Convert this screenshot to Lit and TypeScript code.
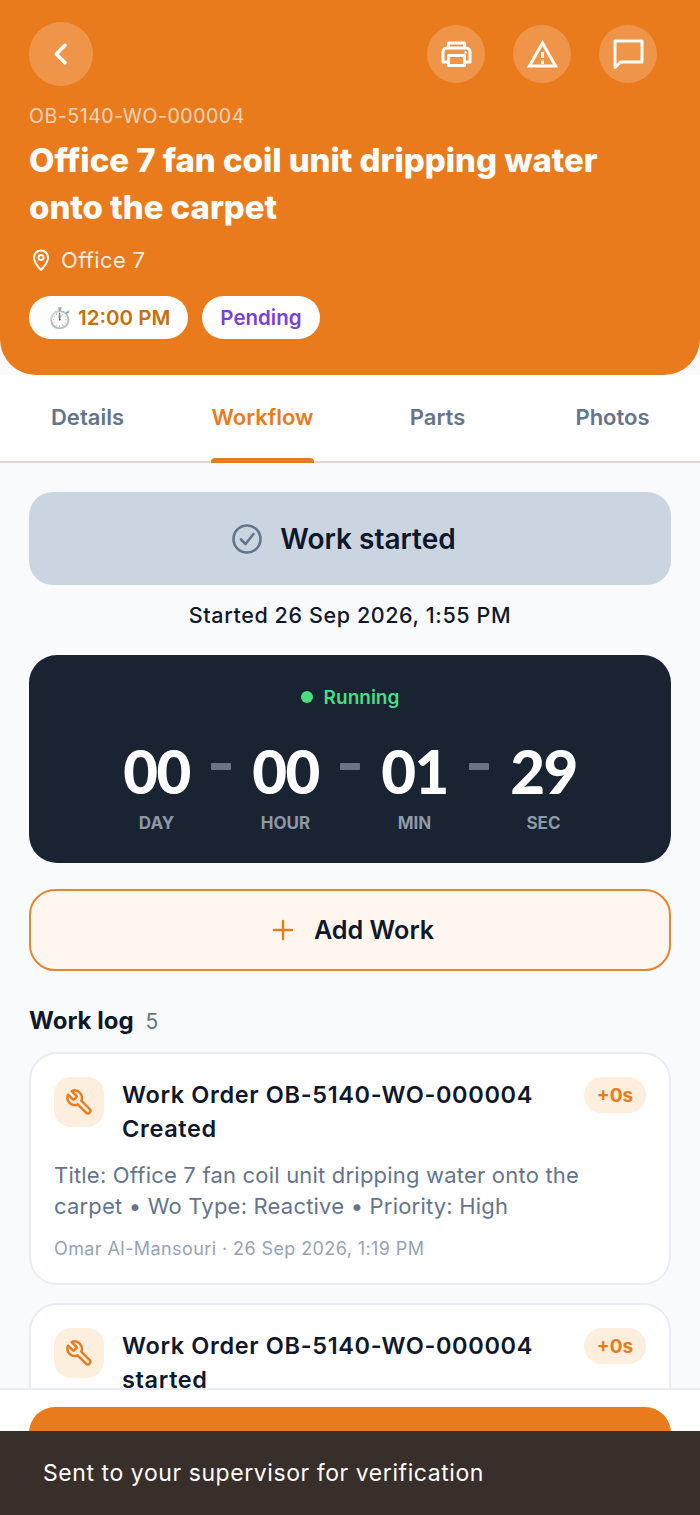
import { LitElement, html, css } from 'lit';
import { customElement } from 'lit/decorators.js';

const wrench = html`<svg viewBox="0 0 24 24" width="29" height="29" fill="none" stroke="currentColor" stroke-width="2" stroke-linecap="round" stroke-linejoin="round"><path d="M14.7 6.3a1 1 0 0 0 0 1.4l1.6 1.6a1 1 0 0 0 1.4 0l3.77-3.77a6 6 0 0 1-7.94 7.94l-6.91 6.91a2.12 2.12 0 0 1-3-3l6.91-6.91a6 6 0 0 1 7.94-7.94l-3.76 3.76z" transform="matrix(-1 0 0 1 24 0)"/></svg>`;

// second entry runs under the footer, only its title is visible
const logs = [
  {
    title: 'Work Order OB-5140-WO-000004 Created',
    desc: 'Title: Office 7 fan coil unit dripping water onto the carpet • Wo Type: Reactive • Priority: High',
    meta: 'Omar Al-Mansouri · 26 Sep 2026, 1:19 PM',
  },
  { title: 'Work Order OB-5140-WO-000004 started', desc: '', meta: '' },
];

const timer = [
  ['00', 'DAY'],
  ['00', 'HOUR'],
  ['01', 'MIN'],
  ['29', 'SEC'],
];

@customElement('app-root')
export class AppRoot extends LitElement {
  static styles = css`
    :host {
      display: flex;
      flex-direction: column;
      position: relative;
      height: 1515px;
      overflow: hidden;
      background: #f8fafc;
      font-family: Inter, 'Liberation Sans', sans-serif;
      color: #0f172a;
    }
    .header {
      flex: none;
      box-sizing: border-box;
      height: 375px;
      background: #ea7b1c;
      border-radius: 0 0 36px 36px;
      padding: 22px 29px 0;
      color: #fff;
    }
    .top {
      display: flex;
      justify-content: space-between;
      align-items: center;
      height: 64px;
      padding-right: 14px;
    }
    .round {
      display: flex;
      align-items: center;
      justify-content: center;
      border-radius: 50%;
      background: rgba(255, 255, 255, 0.2);
    }
    .back {
      width: 64px;
      height: 64px;
    }
    .actions {
      display: flex;
      gap: 28px;
    }
    .actions .round {
      width: 58px;
      height: 58px;
    }
    .code {
      margin-top: 18px;
      font-size: 19.5px;
      line-height: 24px;
      letter-spacing: 0.55px;
      color: rgba(255, 255, 255, 0.7);
    }
    h1 {
      margin: 9px 0 0;
      font-size: 33px;
      line-height: 47px;
      font-weight: 800;
      letter-spacing: -0.05px;
    }
    .place {
      display: flex;
      align-items: center;
      gap: 8px;
      margin-top: 14px;
      height: 30px;
      font-size: 22px;
      letter-spacing: 0.35px;
      color: rgba(255, 255, 255, 0.88);
    }
    .chips {
      display: flex;
      gap: 14px;
      margin-top: 21px;
    }
    .chip {
      display: flex;
      align-items: center;
      gap: 5px;
      height: 43px;
      padding: 0 18px;
      border-radius: 22px;
      background: #fff;
      font-size: 20.5px;
      font-weight: 600;
    }
    .time {
      color: #c2710c;
    }
    .state {
      color: #7c3fd6;
    }
    .tabs {
      flex: none;
      display: grid;
      grid-template-columns: repeat(4, 1fr);
      height: 88px;
      box-sizing: border-box;
      background: #fff;
      border-bottom: 2px solid #e4d6cf;
    }
    .tab {
      display: flex;
      align-items: center;
      justify-content: center;
      position: relative;
      padding-bottom: 2px;
      font-size: 22px;
      font-weight: 600;
      color: #64748b;
    }
    .tab.on {
      color: #ea7b1c;
    }
    .tab.on::after {
      content: '';
      position: absolute;
      left: 36px;
      right: 36px;
      bottom: -2px;
      height: 5px;
      border-radius: 4px 4px 0 0;
      background: #ea7b1c;
    }
    .body {
      flex: 1;
      min-height: 0;
      overflow: hidden;
      padding: 29px 29px 0;
    }
    .started {
      display: flex;
      align-items: center;
      justify-content: center;
      gap: 18px;
      height: 93px;
      padding-right: 12px;
      border-radius: 24px;
      background: #cbd5e1;
      font-size: 28px;
      font-weight: 600;
    }
    .since {
      margin-top: 17px;
      text-align: center;
      font-size: 21.5px;
      line-height: 26px;
      font-weight: 500;
      letter-spacing: 0.6px;
    }
    .clock {
      box-sizing: border-box;
      height: 208px;
      margin-top: 27px;
      padding-top: 30px;
      border-radius: 28px;
      background: #1a2332;
    }
    .running {
      display: flex;
      align-items: center;
      justify-content: center;
      gap: 11px;
      height: 24px;
      font-size: 19px;
      font-weight: 600;
      color: #4ade80;
    }
    .dot {
      width: 12px;
      height: 12px;
      border-radius: 50%;
      background: #4ade80;
    }
    .digits {
      display: flex;
      justify-content: center;
      margin-top: 31px;
    }
    .unit {
      width: 100px;
      text-align: center;
    }
    .num {
      font-family: Lato, Inter, sans-serif;
      font-size: 60px;
      line-height: 62px;
      font-weight: 900;
      letter-spacing: -1.5px;
      color: #fff;
    }
    .lab {
      margin-top: 11px;
      font-size: 17px;
      line-height: 20px;
      font-weight: 700;
      color: #8f98a6;
    }
    .sep {
      width: 20px;
      height: 7px;
      margin: 23px 4.5px 0;
      border-radius: 1px;
      background: #6b7482;
    }
    .add {
      display: flex;
      align-items: center;
      justify-content: center;
      gap: 20px;
      box-sizing: border-box;
      height: 82px;
      margin-top: 26px;
      padding-left: 6px;
      border: 2px solid #e5862f;
      border-radius: 26px;
      background: #fff7ef;
      font-size: 25.2px;
      font-weight: 600;
    }
    .log-head {
      display: flex;
      align-items: baseline;
      gap: 12px;
      margin: 35px 0 15px;
      line-height: 30px;
      font-size: 24px;
      font-weight: 700;
    }
    .log-head span {
      font-size: 21px;
      font-weight: 400;
      color: #64748b;
    }
    .card {
      box-sizing: border-box;
      min-height: 233px;
      margin-bottom: 18px;
      padding: 23px 23px 20px;
      border: 2px solid #e8edf3;
      border-radius: 28px;
      background: #fff;
    }
    .row {
      display: flex;
      align-items: flex-start;
      gap: 18px;
    }
    .icon {
      flex: none;
      display: flex;
      align-items: center;
      justify-content: center;
      width: 50px;
      height: 50px;
      border-radius: 17px;
      background: #fdeedd;
      color: #ea7b1c;
    }
    .name {
      flex: 1;
      margin-top: 1px;
      font-size: 23.5px;
      line-height: 34px;
      font-weight: 600;
      letter-spacing: 0.64px;
    }
    .badge {
      flex: none;
      display: flex;
      align-items: center;
      justify-content: center;
      width: 62px;
      height: 36px;
      border-radius: 18px;
      background: #fdeedd;
      color: #ea7b1c;
      font-size: 19px;
      font-weight: 700;
    }
    .desc {
      margin-top: 14px;
      font-size: 22px;
      line-height: 31px;
      letter-spacing: 0.2px;
      color: #64748b;
    }
    .meta {
      margin-top: 16px;
      font-size: 18px;
      line-height: 22px;
      letter-spacing: 0.41px;
      color: #94a3b8;
    }
    .footer {
      flex: none;
      box-sizing: border-box;
      height: 127px;
      padding: 17px 29px 0;
      background: #fff;
      border-top: 2px solid #e8edf3;
    }
    .cta {
      height: 90px;
      border-radius: 26px;
      background: #ea7b1c;
    }
    .toast {
      position: absolute;
      left: 0;
      right: 0;
      bottom: 0;
      display: flex;
      align-items: center;
      box-sizing: border-box;
      height: 84px;
      padding-left: 43px;
      background: #382e2a;
      color: #fff;
      font-size: 23px;
      letter-spacing: 0.57px;
    }
  `;

  render() {
    return html`
      <div class="header">
        <div class="top">
          <div class="round back">
            <svg viewBox="0 0 24 24" width="32" height="32" fill="none" stroke="#fff" stroke-width="2.7" stroke-linecap="round" stroke-linejoin="round"><path d="M15 5.500 8.500 12l6.500 6.500"/></svg>
          </div>
          <div class="actions">
            <div class="round">
              <svg viewBox="0 0 35 35" width="35" height="35" fill="none" stroke="#fff" stroke-width="3" stroke-linejoin="round"><path d="M9.500 11V6h16v5"/><path d="M9 25H4v-10a4 4 0 0 1 4-4h19a4 4 0 0 1 4 4v10h-5"/><path d="M9.500 18.500h16v10h-16z"/><circle cx="26.500" cy="15.500" r="1.300" fill="#fff" stroke="none"/></svg>
            </div>
            <div class="round">
              <svg viewBox="0 0 35 35" width="35" height="35" fill="none" stroke="#fff" stroke-width="3"><path d="M17.500 6 4.500 29h26z"/><path d="M17.500 15v6M17.500 23.500v3.500"/></svg>
            </div>
            <div class="round">
              <svg viewBox="0 0 35 35" width="35" height="35" fill="none" stroke="#fff" stroke-width="3" stroke-linejoin="round"><path d="M4 4h27v21H9.500L4 30.500z"/></svg>
            </div>
          </div>
        </div>
        <div class="code">OB-5140-WO-000004</div>
        <h1>Office 7 fan coil unit dripping water<br />onto the carpet</h1>
        <div class="place">
          <svg viewBox="0 0 24 24" width="24" height="24" fill="none" stroke="#fff" stroke-width="2" stroke-linejoin="round"><path d="M12 22s7-7.200 7-12.500a7 7 0 0 0-14 0C5 14.800 12 22 12 22z"/><circle cx="12" cy="9.500" r="2.500"/></svg>
          Office 7
        </div>
        <div class="chips">
          <div class="chip time"><span>⏱️</span>12:00 PM</div>
          <div class="chip state">Pending</div>
        </div>
      </div>
      <div class="tabs">
        <div class="tab">Details</div>
        <div class="tab on">Workflow</div>
        <div class="tab">Parts</div>
        <div class="tab">Photos</div>
      </div>
      <div class="body">
        <div class="started">
          <svg viewBox="0 0 30 30" width="30" height="30" fill="none" stroke="#64748b" stroke-width="2.600" stroke-linecap="round" stroke-linejoin="round"><circle cx="15" cy="15" r="13.500"/><path d="m9 15.500 4.500 4.500L21.500 10"/></svg>
          Work started
        </div>
        <div class="since">Started 26 Sep 2026, 1:55 PM</div>
        <div class="clock">
          <div class="running"><i class="dot"></i>Running</div>
          <div class="digits">
            ${timer.map(
              ([n, l], i) => html`
                ${i ? html`<div class="sep"></div>` : ''}
                <div class="unit"><div class="num">${n}</div><div class="lab">${l}</div></div>
              `
            )}
          </div>
        </div>
        <div class="add">
          <svg viewBox="0 0 22 22" width="22" height="22" fill="none" stroke="#ea7b1c" stroke-width="2.400" stroke-linecap="round"><path d="M11 2v18M2 11h18"/></svg>
          Add Work
        </div>
        <div class="log-head">Work log <span>5</span></div>
        ${logs.map(
          (l) => html`
            <div class="card">
              <div class="row">
                <div class="icon">${wrench}</div>
                <div class="name">${l.title}</div>
                <div class="badge">+0s</div>
              </div>
              ${l.desc ? html`<div class="desc">${l.desc}</div><div class="meta">${l.meta}</div>` : ''}
            </div>
          `
        )}
      </div>
      <div class="footer"><div class="cta"></div></div>
      <div class="toast">Sent to your supervisor for verification</div>
    `;
  }
}
